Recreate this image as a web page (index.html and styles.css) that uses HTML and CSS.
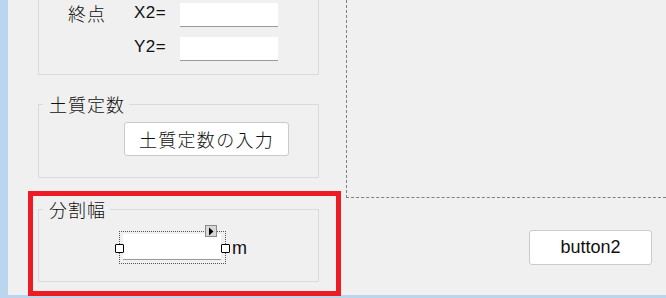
FILE: index.html
```html
<!DOCTYPE html>
<html lang="ja">
<head>
<meta charset="utf-8">
<title>Form designer</title>
<link rel="stylesheet" href="styles.css">
</head>
<body>
<div class="screen">
  <div class="main">
    <div class="rail"></div>
    <div class="left">
      <div class="group group-top">
        <div class="coord-grid">
          <span class="lbl">終点</span>
          <span class="lbl latin">X2=</span>
          <span class="textbox"></span>
          <span></span>
          <span class="lbl latin">Y2=</span>
          <span class="textbox"></span>
        </div>
      </div>
      <fieldset class="group group-soil">
        <legend class="legend">土質定数</legend>
        <button class="btn btn-soil" type="button">土質定数の入力</button>
      </fieldset>
      <div class="highlight">
        <fieldset class="group group-div">
          <legend class="legend">分割幅</legend>
          <div class="field-row">
            <div class="selected">
              <span class="textbox textbox-sel"></span>
              <span class="handle handle-l"></span>
              <span class="handle handle-r"></span>
              <span class="smarttag"><svg width="8" height="9" viewBox="0 0 8 9"><path d="M2 0.5 L6.5 4.5 L2 8.5 Z" fill="#000"/></svg></span>
            </div>
            <span class="unit">m</span>
          </div>
        </fieldset>
      </div>
    </div>
    <div class="right">
      <div class="canvas"></div>
      <button class="btn btn-two" type="button">button2</button>
    </div>
  </div>
  <div class="bottom-bar"></div>
</div>
</body>
</html>
```
FILE: styles.css
```css
* { box-sizing: border-box; }
html, body { margin: 0; padding: 0; }
body {
  background: #f0f0f0;
  font-family: "Noto Sans CJK JP", "Liberation Sans", sans-serif;
  color: #111;
  width: 666px;
  height: 298px;
  overflow: hidden;
}
.screen { width: 666px; height: 298px; display: flex; flex-direction: column; }
.main { display: flex; height: 295px; }
.rail { width: 8px; background: #bcd5ee; flex: none; }
.left { width: 338px; flex: none; }
.right { flex: 1; display: flex; flex-direction: column; align-items: flex-start; }
.bottom-bar { height: 3px; background: #bcd5ee; }

.group {
  border: 1px solid #dadada;
  margin: 0 0 0 30px;
  width: 281px;
  padding: 0;
  min-width: 0;
}
.group-top {
  border-top: none;
  height: 75px;
  padding: 3px 0 0 29px;
}
.coord-grid {
  display: grid;
  grid-template-columns: 66px 46px 98px;
  grid-template-rows: 24px 24px;
  row-gap: 10px;
  align-items: center;
}
.lbl { font-size: 18px; line-height: 20px; letter-spacing: 1px; margin-top: -4px; font-weight: 300; }
.latin { font-family: "Liberation Sans", sans-serif; font-size: 17px; letter-spacing: 0.5px; font-weight: 400; }
.textbox {
  display: block;
  width: 98px;
  height: 24px;
  background: #fff;
  border-bottom: 1px solid #9a9a9a;
}

.legend {
  font-size: 18px;
  line-height: 20px;
  margin-left: 4px;
  padding: 0 4px 0 6px;
  letter-spacing: 1px;
  font-weight: 300;
}
.group-soil { margin-top: 19px; height: 84px; }
.btn {
  background: #fff;
  border: 1px solid #cbcbcb;
  border-radius: 3px;
  color: #111;
  padding: 0;
  cursor: default;
}
.btn-soil {
  margin: 8px 0 0 85px;
  width: 165px;
  height: 34px;
  font-family: "Noto Sans CJK JP", sans-serif;
  font-size: 18px;
  font-weight: 300;
  letter-spacing: 1.3px;
  line-height: 20px;
}

.highlight {
  position: relative;
  z-index: 1;
  margin: 13px 0 0 20px;
  width: 313px;
  height: 105px;
  border: 5px solid #ed1c24;
  padding-top: 3px;
}
.group-div { margin-left: 5px; height: 83px; }
.field-row {
  display: flex;
  align-items: center;
  margin: 12px 0 0 80px;
}
.selected {
  position: relative;
  width: 107px;
  height: 33px;
  border: 1px dotted #555;
  padding: 2px 0 0 3px;
}
.textbox-sel { height: 26px; width: 98px; }
.handle {
  position: absolute;
  top: 12px;
  width: 9px;
  height: 9px;
  background: #fff;
  border: 1px solid #000;
  border-radius: 1px;
}
.handle-l { left: -5px; }
.handle-r { left: 101px; }
.smarttag {
  position: absolute;
  top: -7px;
  left: 85px;
  width: 12px;
  height: 12px;
  background: #d8d8d8;
  border: 1px solid #8a8a8a;
  display: flex;
  align-items: center;
  justify-content: center;
}
.smarttag svg { display: block; }
.unit {
  font-family: "Liberation Sans", sans-serif;
  font-size: 18px;
  line-height: 20px;
  margin-left: 6px;
}

.canvas {
  width: 100%;
  height: 198px;
  border-left: 1px dashed #808080;
  border-bottom: 1px dashed #808080;
}
.btn-two {
  margin: 32px 0 0 183px;
  width: 123px;
  height: 35px;
  font-family: "Liberation Sans", sans-serif;
  font-size: 18px;
}
```
